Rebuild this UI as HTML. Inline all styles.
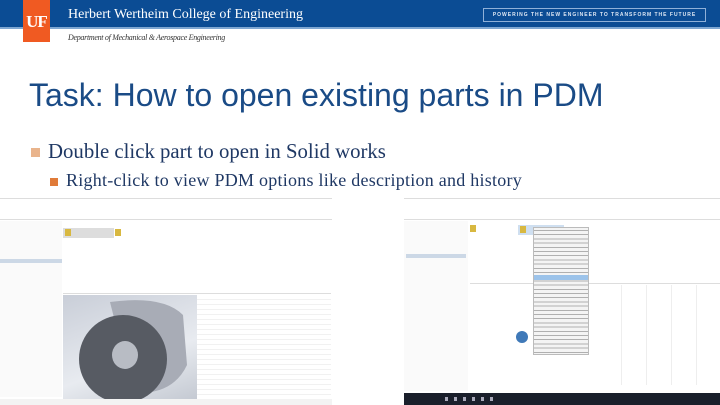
<!DOCTYPE html>
<html><head><meta charset="utf-8"><style>
*{margin:0;padding:0;box-sizing:border-box}
body{width:720px;height:405px;overflow:hidden;background:#fff;position:relative;font-family:"Liberation Sans",sans-serif}
.a{position:absolute}
</style></head><body>
<div class="a" style="left:0;top:0;width:720px;height:28px;background:#0b4c94"></div>
<div class="a" style="left:0;top:27px;width:720px;height:2px;background:#7fa7d2"></div>
<div class="a" style="left:23px;top:0;width:27px;height:42px;background:#f05a22;color:#fff;font:bold 17px 'Liberation Serif',serif;text-align:center;line-height:44px;letter-spacing:-1px">UF</div>
<div class="a" style="left:68px;top:7px;color:#fff;font:14px 'Liberation Serif',serif;white-space:nowrap">Herbert Wertheim College of Engineering</div>
<div class="a" style="left:483px;top:8px;width:223px;height:14px;border:1px solid #8fb0d8;color:#dfe8f4;font:bold 5px 'Liberation Sans',sans-serif;text-align:center;line-height:12px;letter-spacing:1px">POWERING THE NEW ENGINEER TO TRANSFORM THE FUTURE</div>
<div class="a" style="left:68px;top:33px;color:#333;font:italic 8px 'Liberation Serif',serif;letter-spacing:-0.3px">Department of Mechanical &amp; Aerospace Engineering</div>
<div class="a" style="left:29px;top:77px;color:#1a4b86;font-size:32px;white-space:nowrap">Task: How to open existing parts in PDM</div>
<div class="a" style="left:31px;top:148px;width:9px;height:9px;background:#e9b48c"></div>
<div class="a" style="left:48px;top:140px;color:#1f3864;font:20.8px 'Liberation Serif',serif;white-space:nowrap">Double click part to open in Solid works</div>
<div class="a" style="left:50px;top:178px;width:8px;height:8px;background:#e07b39"></div>
<div class="a" style="left:66px;top:170px;color:#1f3864;font:18px 'Liberation Serif',serif;white-space:nowrap;letter-spacing:0.25px">Right-click to view PDM options like description and history</div>

<div class="a" style="left:0;top:198px;width:332px;height:207px;background:#fff;border-top:1px solid #ddd"></div>
<div class="a" style="left:0;top:212px;width:332px;height:8px;border-bottom:1px solid #ddd"></div>
<div class="a" style="left:0;top:221px;width:62px;height:176px;background:#fafafa"></div>
<div class="a" style="left:0;top:259px;width:62px;height:4px;background:#ccd8e6"></div>
<div class="a" style="left:63px;top:228px;width:51px;height:10px;background:#ddd"></div>
<div class="a" style="left:65px;top:229px;width:6px;height:7px;background:#d8b840"></div>
<div class="a" style="left:115px;top:229px;width:6px;height:7px;background:#d8b840"></div>
<div class="a" style="left:63px;top:290px;width:268px;height:4px;border-bottom:1px solid #ddd"></div>
<div class="a" style="left:63px;top:295px;width:134px;height:105px;background:linear-gradient(160deg,#c9ced8,#e8ebf0 60%,#c4c9d2)"></div>
<svg class="a" style="left:63px;top:295px" width="134" height="105">
<path d="M47 7 Q100 0 120 20 L124 70 Q110 100 70 98 Z" fill="#a8acb6"/>
<ellipse cx="60" cy="64" rx="44" ry="44" fill="#575b63"/>
<ellipse cx="62" cy="60" rx="13" ry="14" fill="#b8bcc4"/>
</svg>
<div class="a" style="left:197px;top:295px;width:134px;height:105px;background:repeating-linear-gradient(#fff 0 4px,#f1f1f1 4px 5px)"></div>
<div class="a" style="left:0;top:399px;width:332px;height:6px;background:#f3f3f3"></div>

<div class="a" style="left:404px;top:198px;width:316px;height:195px;background:#fff;border-top:1px solid #ddd"></div>
<div class="a" style="left:404px;top:212px;width:316px;height:8px;border-bottom:1px solid #ddd"></div>
<div class="a" style="left:404px;top:221px;width:64px;height:170px;background:#fafafa"></div>
<div class="a" style="left:406px;top:254px;width:60px;height:4px;background:#ccd8e6"></div>
<div class="a" style="left:470px;top:225px;width:6px;height:7px;background:#d8b840"></div>
<div class="a" style="left:518px;top:225px;width:46px;height:10px;background:#cfdff0"></div>
<div class="a" style="left:520px;top:226px;width:6px;height:7px;background:#d8b840"></div>
<div class="a" style="left:470px;top:281px;width:250px;height:3px;border-bottom:1px solid #ddd"></div>
<div class="a" style="left:597px;top:285px;width:123px;height:100px;background:repeating-linear-gradient(90deg,transparent 0 24px,#eee 24px 25px)"></div>
<div class="a" style="left:533px;top:227px;width:56px;height:128px;background:#f4f4f4;border:1px solid #bbb;background-image:repeating-linear-gradient(#f4f4f4 0 2px,#b0b0b0 2px 3px,#f4f4f4 3px 4.2px)"></div>
<div class="a" style="left:534px;top:275px;width:54px;height:5px;background:#9cc3ea"></div>
<div class="a" style="left:516px;top:331px;width:12px;height:12px;border-radius:50%;background:#3f79b8"></div>
<div class="a" style="left:404px;top:393px;width:316px;height:12px;background:#1a1f2b"></div>
<div class="a" style="left:445px;top:397px;width:50px;height:4px;background:repeating-linear-gradient(90deg,#aab 0 3px,transparent 3px 9px)"></div>
</body></html>
